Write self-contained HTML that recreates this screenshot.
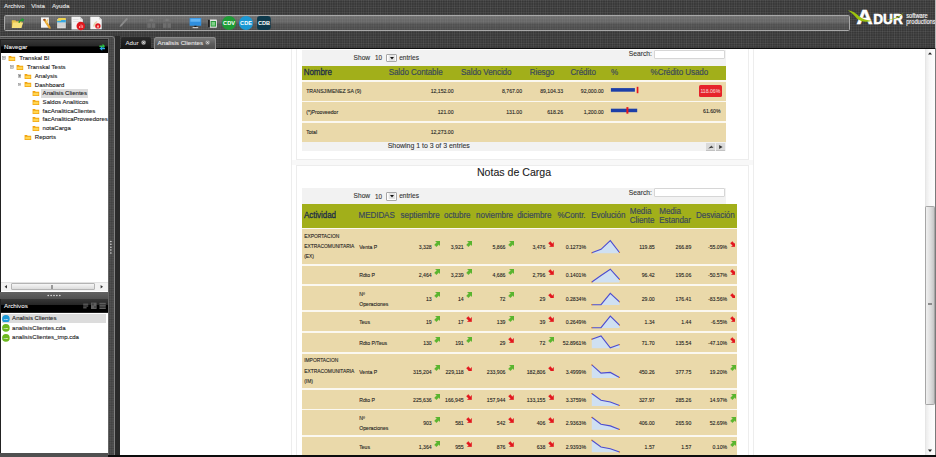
<!DOCTYPE html><html><head><meta charset="utf-8"><title>Adur BI - Analisis Clientes</title><style>
*{box-sizing:border-box}
html,body{margin:0;padding:0}
body{width:936px;height:457px;overflow:hidden;position:relative;background:#363636;font-family:"Liberation Sans",sans-serif;font-size:5px;color:#222}
.abs,.abs>*{position:absolute}
.t{position:absolute;white-space:nowrap;line-height:1;-webkit-text-stroke:.1px currentColor}
.hd{-webkit-text-stroke:.16px currentColor;letter-spacing:-.08px;transform:scaleY(1.1)}
.hs{-webkit-text-stroke:.25px currentColor}
.carbon{background-color:#373737;background-image:linear-gradient(rgba(255,255,255,.075) 1px,transparent 1px),linear-gradient(90deg,rgba(255,255,255,.075) 1px,transparent 1px);background-size:2.4px 2.4px}
.ui{font-family:"Liberation Sans",sans-serif;font-size:6.1px}
.cell{font-size:5px;color:#222}
.row{position:absolute;background:#ead9aa}
.r{text-align:right}
</style></head><body>
<div class="carbon" style="position:absolute;left:0.00px;top:0.00px;width:936.00px;height:49.00px;"></div>
<div class="" style="position:absolute;left:108.00px;top:47.90px;width:828.00px;height:1.10px;background:#0e0e0e"></div>
<div class="t " style="font-size:6.2px;color:#e4e4e4;left:4.00px;top:2.48px;height:7.44px;line-height:7.44px;">Archivo</div>
<div class="t " style="font-size:6.2px;color:#e4e4e4;left:31.30px;top:2.48px;height:7.44px;line-height:7.44px;">Vista</div>
<div class="t " style="font-size:6.2px;color:#e4e4e4;left:51.90px;top:2.48px;height:7.44px;line-height:7.44px;">Ayuda</div>
<div class="" style="position:absolute;left:3.70px;top:15.00px;width:846.10px;height:16.40px;border:1px solid #a8a8a8;border-radius:1.5px;background-image:linear-gradient(rgba(255,255,255,.05) 1px,transparent 1px),linear-gradient(90deg,rgba(255,255,255,.05) 1px,transparent 1px),linear-gradient(#6e6e6e,#646464 46%,#525252 54%,#4a4a4a);background-size:2.4px 2.4px,2.4px 2.4px,auto"></div>
<svg style="position:absolute;left:0.00px;top:12.00px;" width="300.00" height="22.00" viewBox="0 12 300 22"><path d="M11.8 20.2 h3.6 l0.8 1 h5.2 v6.9 h-9.6z" fill="#e8c24a"/><path d="M11.8 28.1 l1.4-5.6 h10 l-1.9 5.6z" fill="#f7e07a"/><path d="M18.3 22.6 c0.6-2.2 2-3.3 3.6-3.4 l-0.5-1.2 3 1.3 -1.6 2.8 -0.4-1.3 c-1.3 0.1-2.3 0.8-2.9 2.1z" fill="#1f9a32"/><rect x="41" y="17.4" width="7.9" height="10.3" fill="#f4f4f4"/><path d="M43 19.6 l2-0.9 5.6 8.4 -0.2 1.8 -1.7-0.7z" fill="#eaa62e"/><path d="M43 19.6 l2-0.9 0.9 1.3 -2 1z" fill="#9a4a2a"/><path d="M47.2 19.2 l1.2 0.4 -1.6 4 -1.0-1.4z" fill="#f0c860"/><rect x="57.1" y="19.2" width="8.7" height="9.1" fill="#d9d9d9"/><rect x="58.2" y="18" width="7.6" height="1.9" fill="#f2d54a"/><rect x="57.1" y="20" width="8.7" height="2.4" fill="#35a7e0"/><rect x="57.1" y="19.6" width="4" height="1.2" fill="#f0d850"/><rect x="57.1" y="23.6" width="8.7" height="0.7" fill="#c4c4c4"/><rect x="57.1" y="25.6" width="8.7" height="0.7" fill="#c4c4c4"/><path d="M71.5 16.8 h8.6 l2.7 2.7 v10.1 h-11.3z" fill="#f2f2f2"/><path d="M80.1 16.8 v2.7 h2.7z" fill="#cfcfcf"/><rect x="73" y="19" width="5.5" height="0.8" fill="#ddd"/><rect x="73" y="21" width="7.5" height="0.8" fill="#ddd"/><circle cx="80.8" cy="26" r="4.3" fill="#e0161c"/><path d="M79 28 v-2 h1 v2z M80.6 28 v-3.6 h1 v3.6z M82.2 28 v-2.7 h0.9 v2.7z" fill="#f4a0a0"/><path d="M90.3 16.8 h8.8 l2.6 2.6 v9.9 h-11.4z" fill="#f4f4f4"/><path d="M99.1 16.8 v2.6 h2.6z" fill="#cfcfcf"/><path d="M93 26.5 c0.5-3 2-5 4-5.5 l0.5 1 c-1.5 0.8-2.6 2.4-3 4.8z" fill="#e3d2a8"/><circle cx="97.9" cy="25.9" r="2.7" fill="#e0161c"/><path d="M96.6 27.6 c0.3-1.6 1-2.6 1.6-2.9 0.5 0.6 0.9 1.6 1 2.9z" fill="#f6b0a8"/><path d="M119.6 27 l0.6-2 6.3-7.3 1.5 1.2 -6.4 7.4z" fill="#8a8a8a"/><g fill="#707070" opacity=".9"><rect x="147.3" y="17.8" width="8" height="4.4"/><rect x="147.3" y="23.2" width="3.6" height="4.6"/><rect x="151.70000000000002" y="23.2" width="3.6" height="4.6"/></g><rect x="149.70000000000002" y="18.6" width="3.2" height="2.6" fill="#7a7a7a"/><g fill="#707070" opacity=".9"><rect x="163" y="17.8" width="8" height="4.4"/><rect x="163" y="23.2" width="3.6" height="4.6"/><rect x="167.4" y="23.2" width="3.6" height="4.6"/></g><rect x="165.4" y="18.6" width="3.2" height="2.6" fill="#7a7a7a"/><rect x="189.6" y="18" width="11.6" height="7.8" rx=".6" fill="#2f8fe0"/><rect x="190.4" y="18.7" width="10" height="3" fill="#62b4f4"/><rect x="194.3" y="25.8" width="2.2" height="1.4" fill="#1a1a1a"/><rect x="192.6" y="27" width="5.6" height="1.2" fill="#c8c8c8"/><rect x="207.9" y="19.5" width="9" height="8.2" rx=".6" fill="#e6e6e6"/><rect x="207.9" y="19.5" width="2" height="8.2" fill="#222"/><rect x="210.6" y="21" width="5.4" height="5.6" fill="#2c9a3c"/><rect x="211.6" y="22" width="3.4" height="3.6" fill="#7fd088"/><circle cx="229" cy="23" r="7.1" fill="#1f9c36"/><circle cx="246" cy="23" r="7.1" fill="#1b98d4"/><rect x="257" y="16" width="13.8" height="14" rx="3.2" fill="#0e3a4c"/><text x="229" y="25" font-family="Liberation Sans, sans-serif" font-weight="bold" font-size="5.6" fill="#fff" text-anchor="middle">CDV</text><text x="246" y="25" font-family="Liberation Sans, sans-serif" font-weight="bold" font-size="5.6" fill="#fff" text-anchor="middle">CDE</text><text x="264" y="25" font-family="Liberation Sans, sans-serif" font-weight="bold" font-size="5.6" fill="#fff" text-anchor="middle">CDB</text></svg>
<svg style="position:absolute;left:840.00px;top:4.00px;" width="96.00" height="28.00" viewBox="840 4 96 28"><text x="856.6" y="24.1" font-family="Liberation Sans, sans-serif" font-weight="bold" font-size="20.9" fill="#fff" stroke="#fff" stroke-width=".5" textLength="16.2" lengthAdjust="spacingAndGlyphs">A</text><text x="873.2" y="24.1" font-family="Liberation Sans, sans-serif" font-weight="bold" font-size="14.3" fill="#fff" stroke="#fff" stroke-width=".5" textLength="29.6" lengthAdjust="spacingAndGlyphs">DUR</text><path d="M847.8 10.2 c4.6 0.6 8.2 2.6 11.6 6.4 c3.4 2.6 7.4 3.8 12.4 4.2 c-5.6 1.6-10.8 1-14.6-2 c-2.6-3.4-5.4-6.2-9.4-8.6z" fill="#9cc20e"/><path d="M886.6 19.8 c6.4-0.4 12.4-2.8 17.2-7.4 c-4 5.2-10 8-17.2 7.4z" fill="#9cc20e"/><text x="906.2" y="18.4" font-family="Liberation Sans, sans-serif" font-size="6.4" fill="#f4f4f4" stroke="#f4f4f4" stroke-width=".15" textLength="21.6" lengthAdjust="spacingAndGlyphs">software</text><text x="906.2" y="24.3" font-family="Liberation Sans, sans-serif" font-size="6.4" fill="#f4f4f4" stroke="#f4f4f4" stroke-width=".15" textLength="29.4" lengthAdjust="spacingAndGlyphs">productions</text></svg>
<div class="" style="position:absolute;left:-2.00px;top:36.20px;width:117.20px;height:425.80px;border:1px solid #808080;border-radius:3px;background-color:#515151;background-image:linear-gradient(rgba(0,0,0,.12) 1px,transparent 1px),linear-gradient(90deg,rgba(0,0,0,.12) 1px,transparent 1px);background-size:2.4px 2.4px"></div>
<div class="" style="position:absolute;left:115.20px;top:36.00px;width:4.80px;height:421.00px;background:#2a2a2a"></div>
<div class="" style="position:absolute;left:108.00px;top:38.40px;width:1.40px;height:418.60px;background:#666"></div>
<div class="" style="position:absolute;left:0.00px;top:38.40px;width:108.00px;height:1.00px;background:#666"></div>
<div class="" style="position:absolute;left:0.00px;top:39.40px;width:108.00px;height:252.60px;background:#222"></div>
<div class="" style="position:absolute;left:0.60px;top:40.20px;width:107.00px;height:13.40px;background:linear-gradient(#383838,#262626 44%,#000 48%,#000)"></div>
<div class="t " style="font-size:6.2px;color:#f0f0f0;left:4.00px;top:43.08px;height:7.44px;line-height:7.44px;">Navegar</div>
<svg style="position:absolute;left:98.50px;top:43.00px;" width="6.50" height="7.50" viewBox="0 0 6.50 7.50"><path d="M0.4 2.4 h3.2 v-1.6 l2.6 2.4 -2.6 2.2 v-1.4 h-3.2z" fill="#2fbf3f"/><path d="M6.2 5.6 h-3 v1.5 l-2.7-2.2 2.7-2.2 v1.4 h3z" fill="#2aa6e8" transform="translate(0,0.6)"/></svg>
<div class="" style="position:absolute;left:0.60px;top:53.40px;width:107.20px;height:238.40px;background:#fff"></div>
<div style="position:absolute;left:1px;top:53.6px;width:106.6px;height:228px;overflow:hidden">
<svg style="position:absolute;left:1.00px;top:2.90px" width="3.8" height="3.8" viewBox="0 0 3.8 3.8"><rect x="0.25" y="0.25" width="3.3" height="3.3" fill="#f4f4f4" stroke="#8a8a8a" stroke-width=".5"/><rect x="0.9" y="1.65" width="2" height=".55" fill="#333"/></svg>
<svg style="position:absolute;left:7.40px;top:1.60px" width="7.8" height="6.4" viewBox="0 0 8 7"><path d="M0.4 1 h2.6 l0.8 0.9 h3.8 v4.6 h-7.2z" fill="#f2a20c"/><path d="M1.1 3 h5.8 v2.8 h-5.8z" fill="#ffd652"/></svg>
<div class="t" style="left:18.20px;top:0.80px;height:8px;line-height:8px;font-size:6.05px;color:#1a1a1a">Transkal BI</div>
<svg style="position:absolute;left:8.80px;top:11.62px" width="3.8" height="3.8" viewBox="0 0 3.8 3.8"><rect x="0.25" y="0.25" width="3.3" height="3.3" fill="#f4f4f4" stroke="#8a8a8a" stroke-width=".5"/><rect x="0.9" y="1.65" width="2" height=".55" fill="#333"/></svg>
<svg style="position:absolute;left:15.20px;top:10.32px" width="7.8" height="6.4" viewBox="0 0 8 7"><path d="M0.4 1 h2.6 l0.8 0.9 h3.8 v4.6 h-7.2z" fill="#f2a20c"/><path d="M1.1 3 h5.8 v2.8 h-5.8z" fill="#ffd652"/></svg>
<div class="t" style="left:26.00px;top:9.52px;height:8px;line-height:8px;font-size:6.05px;color:#1a1a1a">Transkal Tests</div>
<svg style="position:absolute;left:16.60px;top:20.34px" width="3.8" height="3.8" viewBox="0 0 3.8 3.8"><rect x="0.25" y="0.25" width="3.3" height="3.3" fill="#f4f4f4" stroke="#8a8a8a" stroke-width=".5"/><rect x="0.9" y="1.65" width="2" height=".55" fill="#333"/><rect x="1.63" y="0.9" width=".55" height="2" fill="#333"/></svg>
<svg style="position:absolute;left:23.00px;top:19.04px" width="7.8" height="6.4" viewBox="0 0 8 7"><path d="M0.4 1 h2.6 l0.8 0.9 h3.8 v4.6 h-7.2z" fill="#f2a20c"/><path d="M1.1 3 h5.8 v2.8 h-5.8z" fill="#ffd652"/></svg>
<div class="t" style="left:33.80px;top:18.24px;height:8px;line-height:8px;font-size:6.05px;color:#1a1a1a">Analysis</div>
<svg style="position:absolute;left:16.60px;top:29.06px" width="3.8" height="3.8" viewBox="0 0 3.8 3.8"><rect x="0.25" y="0.25" width="3.3" height="3.3" fill="#f4f4f4" stroke="#8a8a8a" stroke-width=".5"/><rect x="0.9" y="1.65" width="2" height=".55" fill="#333"/></svg>
<svg style="position:absolute;left:23.00px;top:27.76px" width="7.8" height="6.4" viewBox="0 0 8 7"><path d="M0.4 1 h2.6 l0.8 0.9 h3.8 v4.6 h-7.2z" fill="#f2a20c"/><path d="M1.1 3 h5.8 v2.8 h-5.8z" fill="#ffd652"/></svg>
<div class="t" style="left:33.80px;top:26.96px;height:8px;line-height:8px;font-size:6.05px;color:#1a1a1a">Dashboard</div>
<div style="position:absolute;left:40.20px;top:35.38px;width:46.5px;height:8.6px;background:#dcdcdc"></div>
<svg style="position:absolute;left:30.80px;top:36.48px" width="7.8" height="6.4" viewBox="0 0 8 7"><path d="M0.4 1 h2.6 l0.8 0.9 h3.8 v4.6 h-7.2z" fill="#f2a20c"/><path d="M1.1 3 h5.8 v2.8 h-5.8z" fill="#ffd652"/></svg>
<div class="t" style="left:41.60px;top:35.68px;height:8px;line-height:8px;font-size:6.05px;color:#1a1a1a">Analisis Clientes</div>
<svg style="position:absolute;left:30.80px;top:45.20px" width="7.8" height="6.4" viewBox="0 0 8 7"><path d="M0.4 1 h2.6 l0.8 0.9 h3.8 v4.6 h-7.2z" fill="#f2a20c"/><path d="M1.1 3 h5.8 v2.8 h-5.8z" fill="#ffd652"/></svg>
<div class="t" style="left:41.60px;top:44.40px;height:8px;line-height:8px;font-size:6.05px;color:#1a1a1a">Saldos Analiticos</div>
<svg style="position:absolute;left:30.80px;top:53.92px" width="7.8" height="6.4" viewBox="0 0 8 7"><path d="M0.4 1 h2.6 l0.8 0.9 h3.8 v4.6 h-7.2z" fill="#f2a20c"/><path d="M1.1 3 h5.8 v2.8 h-5.8z" fill="#ffd652"/></svg>
<div class="t" style="left:41.60px;top:53.12px;height:8px;line-height:8px;font-size:6.05px;color:#1a1a1a">facAnaliticaClientes</div>
<svg style="position:absolute;left:30.80px;top:62.64px" width="7.8" height="6.4" viewBox="0 0 8 7"><path d="M0.4 1 h2.6 l0.8 0.9 h3.8 v4.6 h-7.2z" fill="#f2a20c"/><path d="M1.1 3 h5.8 v2.8 h-5.8z" fill="#ffd652"/></svg>
<div class="t" style="left:41.60px;top:61.84px;height:8px;line-height:8px;font-size:6.05px;color:#1a1a1a">facAnaliticaProveedores</div>
<svg style="position:absolute;left:30.80px;top:71.36px" width="7.8" height="6.4" viewBox="0 0 8 7"><path d="M0.4 1 h2.6 l0.8 0.9 h3.8 v4.6 h-7.2z" fill="#f2a20c"/><path d="M1.1 3 h5.8 v2.8 h-5.8z" fill="#ffd652"/></svg>
<div class="t" style="left:41.60px;top:70.56px;height:8px;line-height:8px;font-size:6.05px;color:#1a1a1a">notaCarga</div>
<svg style="position:absolute;left:23.00px;top:80.08px" width="7.8" height="6.4" viewBox="0 0 8 7"><path d="M0.4 1 h2.6 l0.8 0.9 h3.8 v4.6 h-7.2z" fill="#f2a20c"/><path d="M1.1 3 h5.8 v2.8 h-5.8z" fill="#ffd652"/></svg>
<div class="t" style="left:33.80px;top:79.28px;height:8px;line-height:8px;font-size:6.05px;color:#1a1a1a">Reports</div>
</div>
<div class="" style="position:absolute;left:1.00px;top:282.00px;width:106.60px;height:9.00px;background:#f2f2f2;border-top:1px solid #e2e2e2"></div>
<div class="" style="position:absolute;left:11.40px;top:283.00px;width:83.90px;height:7.40px;background:linear-gradient(#f6f6f6,#dcdcdc);border:1px solid #b4b4b4;border-radius:1px"></div>
<svg style="position:absolute;left:2.00px;top:283.00px;" width="8.00" height="7.50" viewBox="0 0 8.00 7.50"><path d="M5 2 v3.6 l-2.4-1.8z" fill="#333"/></svg>
<svg style="position:absolute;left:97.00px;top:283.00px;" width="9.00" height="7.50" viewBox="0 0 9.00 7.50"><path d="M3.6 2 v3.6 l2.4-1.8z" fill="#333"/></svg>
<div class="" style="position:absolute;left:51.30px;top:285.00px;width:4.00px;height:3.60px;background:repeating-linear-gradient(90deg,#999 0,#999 .6px,transparent .6px,transparent 1.3px)"></div>
<div class="" style="position:absolute;left:0.00px;top:291.80px;width:108.00px;height:7.00px;background:linear-gradient(#626262,#505050)"></div>
<svg style="position:absolute;left:46.00px;top:293.00px;" width="16.00" height="5.00" viewBox="0 0 16.00 5.00"><circle cx="2.2" cy="2.4" r=".75" fill="#ededed"/><circle cx="5.1" cy="2.4" r=".75" fill="#ededed"/><circle cx="8.0" cy="2.4" r=".75" fill="#ededed"/><circle cx="10.9" cy="2.4" r=".75" fill="#ededed"/><circle cx="13.8" cy="2.4" r=".75" fill="#ededed"/></svg>
<div class="" style="position:absolute;left:0.00px;top:298.60px;width:108.00px;height:154.40px;background:#222"></div>
<div class="" style="position:absolute;left:0.60px;top:298.80px;width:107.40px;height:13.70px;background:linear-gradient(#383838,#262626 44%,#000 48%,#000)"></div>
<div class="t " style="font-size:6.2px;color:#f0f0f0;left:4.00px;top:302.28px;height:7.44px;line-height:7.44px;">Archivos</div>
<svg style="position:absolute;left:82.00px;top:302.00px;" width="25.00" height="8.00" viewBox="0 0 25.00 8.00"><g fill="#5e5e5e"><rect x="1.2" y="1.6" width="5" height="1.2"/><rect x="1.2" y="3.4" width="5" height="1.2"/><rect x="1.2" y="5.2" width="3.4" height="1.2"/><rect x="9" y="0.6" width="5.6" height="6.4"/><rect x="17.4" y="0.8" width="6.4" height="1.6"/><rect x="17.4" y="3.1" width="6.4" height="1.6"/><rect x="17.4" y="5.4" width="6.4" height="1.6"/></g><rect x="9.8" y="1.4" width="2" height="2" fill="#444"/><rect x="12.2" y="4" width="1.6" height="2" fill="#444"/></svg>
<div class="" style="position:absolute;left:0.60px;top:312.50px;width:107.20px;height:140.10px;background:#fff"></div>
<div class="" style="position:absolute;left:2.00px;top:314.20px;width:104.00px;height:8.40px;background:#dcdcdc"></div>
<svg style="position:absolute;left:2.10px;top:314.50px;" width="7.80" height="7.80" viewBox="0 0 7.80 7.80"><circle cx="3.9" cy="3.9" r="3.8" fill="#1d9ad8"/><text x="3.9" y="4.8" font-family="Liberation Sans, sans-serif" font-weight="bold" font-size="2.4" fill="#fff" text-anchor="middle">cde</text></svg>
<div class="t " style="font-size:6.05px;color:#1a1a1a;left:12.10px;top:314.77px;height:7.26px;line-height:7.26px;">Analisis Clientes</div>
<svg style="position:absolute;left:2.10px;top:324.35px;" width="7.80" height="7.80" viewBox="0 0 7.80 7.80"><circle cx="3.9" cy="3.9" r="3.8" fill="#6cb81e"/><text x="3.9" y="4.8" font-family="Liberation Sans, sans-serif" font-weight="bold" font-size="2.4" fill="#fff" text-anchor="middle">cda</text></svg>
<div class="t " style="font-size:6.05px;color:#1a1a1a;left:12.10px;top:324.62px;height:7.26px;line-height:7.26px;">analisisClientes.cda</div>
<svg style="position:absolute;left:2.10px;top:334.20px;" width="7.80" height="7.80" viewBox="0 0 7.80 7.80"><circle cx="3.9" cy="3.9" r="3.8" fill="#6cb81e"/><text x="3.9" y="4.8" font-family="Liberation Sans, sans-serif" font-weight="bold" font-size="2.4" fill="#fff" text-anchor="middle">cda</text></svg>
<div class="t " style="font-size:6.05px;color:#1a1a1a;left:12.10px;top:334.47px;height:7.26px;line-height:7.26px;">analisisClientes_tmp.cda</div>
<svg style="position:absolute;left:109.00px;top:239.00px;" width="4.00" height="17.00" viewBox="0 0 4.00 17.00"><circle cx="1.9" cy="2.4" r=".75" fill="#e6e6e6"/><circle cx="1.9" cy="5.3" r=".75" fill="#e6e6e6"/><circle cx="1.9" cy="8.2" r=".75" fill="#e6e6e6"/><circle cx="1.9" cy="11.1" r=".75" fill="#e6e6e6"/><circle cx="1.9" cy="14.0" r=".75" fill="#e6e6e6"/></svg>
<div class="" style="position:absolute;left:0.00px;top:452.80px;width:108.00px;height:4.20px;background:#505050"></div>
<div class="" style="position:absolute;left:121.40px;top:36.60px;width:29.80px;height:12.20px;background:linear-gradient(#2a2a2a,#141414);border-radius:2px 2px 0 0"></div>
<div class="t " style="font-size:6.2px;color:#dcdcdc;left:125.40px;top:38.78px;height:7.44px;line-height:7.44px;">Adur</div>
<div class="" style="position:absolute;left:154.00px;top:36.80px;width:62.20px;height:12.00px;background:linear-gradient(#7a7a7a,#5e5e5e 50%,#4c4c4c);border:1px solid #8c8c8c;border-bottom:none;border-radius:2.5px 2.5px 0 0"></div>
<div class="t " style="font-size:6.2px;color:#e6e6e6;left:157.60px;top:38.78px;height:7.44px;line-height:7.44px;">Analisis Clientes</div>
<svg style="position:absolute;left:140.80px;top:40.20px;" width="5.20" height="5.20" viewBox="0 0 5.20 5.20"><circle cx="2.6" cy="2.6" r="2.4" fill="#8a8a8a"/><path d="M1.5 1.5 l2.2 2.2 M3.7 1.5 l-2.2 2.2" stroke="#eee" stroke-width=".7"/></svg>
<svg style="position:absolute;left:205.00px;top:40.20px;" width="5.20" height="5.20" viewBox="0 0 5.20 5.20"><circle cx="2.6" cy="2.6" r="2.4" fill="#8a8a8a"/><path d="M1.5 1.5 l2.2 2.2 M3.7 1.5 l-2.2 2.2" stroke="#eee" stroke-width=".7"/></svg>
<div class="" style="position:absolute;left:120.00px;top:48.80px;width:815.40px;height:406.00px;background:#fff"></div>
<div class="" style="position:absolute;left:935.20px;top:0.00px;width:0.80px;height:48.00px;background:#b8b8b8"></div>
<div class="" style="position:absolute;left:935.20px;top:48.00px;width:0.80px;height:409.00px;background:#7a7a7a"></div>
<div class="" style="position:absolute;left:108.00px;top:454.80px;width:828.00px;height:2.20px;background:#0c0c0c"></div>
<div class="" style="position:absolute;left:291.30px;top:48.80px;width:0.80px;height:406.00px;background:#ededed"></div>
<div class="" style="position:absolute;left:753.40px;top:48.80px;width:0.80px;height:406.00px;background:#ededed"></div>
<div class="" style="position:absolute;left:292.10px;top:159.80px;width:461.30px;height:5.00px;background:#f8f8f8"></div>
<div class="" style="position:absolute;left:296.20px;top:48.80px;width:453.20px;height:111.20px;border:0.8px solid #ededed;border-top:none;background:#fff"></div>
<div class="" style="position:absolute;left:296.20px;top:164.60px;width:453.20px;height:295.40px;border:0.8px solid #ededed;background:#fff"></div>
<div class="" style="position:absolute;left:301.70px;top:50.40px;width:423.90px;height:101.00px;background:#f2f2f2"></div>
<div class="t " style="font-size:6.6px;color:#333;left:353.60px;top:54.34px;height:7.92px;line-height:7.92px;">Show</div>
<div class="t " style="font-size:6.4px;color:#333;left:374.90px;top:54.46px;height:7.68px;line-height:7.68px;">10</div>
<div class="" style="position:absolute;left:385.60px;top:54.10px;width:11.00px;height:8.40px;border:0.8px solid #a8a8a8;background:#fff;border-radius:1px"></div>
<svg style="position:absolute;left:388.00px;top:55.30px;" width="8.00" height="6.00" viewBox="0 0 8.00 6.00"><rect x="0.6" y="0" width="6.6" height="6" fill="#e4e4e4"/><path d="M2 2 h4 l-2 2.4z" fill="#111"/></svg>
<div class="t " style="font-size:6.6px;color:#333;left:399.20px;top:54.34px;height:7.92px;line-height:7.92px;">entries</div>
<div class="t " style="font-size:6.7px;color:#333;left:628.80px;top:50.38px;height:8.04px;line-height:8.04px;">Search:</div>
<div class="" style="position:absolute;left:654.40px;top:50.00px;width:70.60px;height:8.90px;border:0.8px solid #d6d6d6;background:#fff;border-radius:1px"></div>
<div class="" style="position:absolute;left:301.70px;top:66.20px;width:423.90px;height:14.40px;background:#a2af1a"></div>
<div class="t hd hs" style="font-size:8.05px;color:#1c2c48;left:303.70px;top:68.47px;height:9.66px;line-height:9.66px;">Nombre</div>
<div class="t hd" style="font-size:8.05px;color:#3a485c;left:388.70px;top:68.47px;height:9.66px;line-height:9.66px;">Saldo Contable</div>
<div class="t hd" style="font-size:8.05px;color:#3a485c;left:461.00px;top:68.47px;height:9.66px;line-height:9.66px;">Saldo Vencido</div>
<div class="t hd" style="font-size:8.05px;color:#3a485c;left:529.70px;top:68.47px;height:9.66px;line-height:9.66px;">Riesgo</div>
<div class="t hd" style="font-size:8.05px;color:#3a485c;left:570.40px;top:68.47px;height:9.66px;line-height:9.66px;">Crédito</div>
<div class="t hd" style="font-size:8.05px;color:#3a485c;left:610.90px;top:68.47px;height:9.66px;line-height:9.66px;">%</div>
<div class="t hd" style="font-size:8.05px;color:#3a485c;left:650.60px;top:68.47px;height:9.66px;line-height:9.66px;">%Crédito Usado</div>
<div class="" style="position:absolute;left:301.70px;top:80.20px;width:423.90px;height:1.80px;background:#fbf8f0"></div>
<div class="" style="position:absolute;left:301.70px;top:81.75px;width:423.90px;height:19.00px;background:#ead9aa"></div>
<div class="" style="position:absolute;left:301.70px;top:100.50px;width:423.90px;height:1.80px;background:#fbf8f0"></div>
<div class="" style="position:absolute;left:301.70px;top:102.05px;width:423.90px;height:19.20px;background:#ead9aa"></div>
<div class="" style="position:absolute;left:301.70px;top:121.00px;width:423.90px;height:1.80px;background:#fbf8f0"></div>
<div class="" style="position:absolute;left:301.70px;top:122.55px;width:423.90px;height:19.10px;background:#ead9aa"></div>
<div class="t " style="font-size:5.15px;color:#1f1f1f;left:306.20px;top:88.36px;height:6.18px;line-height:6.18px;">TRANSJIMENEZ SA (9)</div>
<div class="t " style="font-size:5.15px;color:#1f1f1f;right:482.50px;top:88.36px;height:6.18px;line-height:6.18px;">12,152.00</div>
<div class="t " style="font-size:5.15px;color:#1f1f1f;right:414.00px;top:88.36px;height:6.18px;line-height:6.18px;">8,767.00</div>
<div class="t " style="font-size:5.15px;color:#1f1f1f;right:373.00px;top:88.36px;height:6.18px;line-height:6.18px;">89,104.33</div>
<div class="t " style="font-size:5.15px;color:#1f1f1f;right:332.30px;top:88.36px;height:6.18px;line-height:6.18px;">92,000.00</div>
<div class="t " style="font-size:5.15px;color:#1f1f1f;left:306.20px;top:108.76px;height:6.18px;line-height:6.18px;">(*)Prooveedor</div>
<div class="t " style="font-size:5.15px;color:#1f1f1f;right:482.50px;top:108.76px;height:6.18px;line-height:6.18px;">121.00</div>
<div class="t " style="font-size:5.15px;color:#1f1f1f;right:414.00px;top:108.76px;height:6.18px;line-height:6.18px;">131.00</div>
<div class="t " style="font-size:5.15px;color:#1f1f1f;right:373.00px;top:108.76px;height:6.18px;line-height:6.18px;">618.26</div>
<div class="t " style="font-size:5.15px;color:#1f1f1f;right:332.30px;top:108.76px;height:6.18px;line-height:6.18px;">1,200.00</div>
<div class="t " style="font-size:5.15px;color:#1f1f1f;left:306.20px;top:129.21px;height:6.18px;line-height:6.18px;">Total</div>
<div class="t " style="font-size:5.15px;color:#1f1f1f;right:482.50px;top:129.21px;height:6.18px;line-height:6.18px;">12,273.00</div>
<svg style="position:absolute;left:605.00px;top:84.00px;" width="40.00" height="32.00" viewBox="605 84 40 32"><rect x="610.9" y="88.1" width="24" height="3.6" fill="#1d3fa8"/><rect x="636.7" y="86.8" width="1.7" height="6.4" fill="#e8161c"/><rect x="610.9" y="108.7" width="26.3" height="3.5" fill="#1d3fa8"/><rect x="626.4" y="107.1" width="2" height="6.6" fill="#e8161c"/></svg>
<div class="" style="position:absolute;left:699.20px;top:85.20px;width:22.40px;height:11.50px;background:#e6232b;border-radius:1.6px"></div>
<div class="t " style="font-size:5.15px;color:#f7c6c6;right:215.70px;top:88.11px;height:6.18px;line-height:6.18px;">118.06%</div>
<div class="t " style="font-size:5.15px;color:#1f1f1f;right:215.50px;top:108.41px;height:6.18px;line-height:6.18px;">61.60%</div>
<div class="t " style="font-size:6.95px;color:#333;left:387.70px;top:142.03px;height:8.34px;line-height:8.34px;">Showing 1 to 3 of 3 entries</div>
<svg style="position:absolute;left:705.60px;top:143.20px;" width="9.10" height="8.20" viewBox="0 0 9.10 8.20"><rect x="0" y="0" width="9.1" height="8.2" fill="#dadada"/><rect x="0" y="7" width="9.1" height="1.2" fill="#c2c2c2"/><path d="M2.2 5.4 l3.6-3 v1.4 h1.4 v1 h-1.4 v0z" fill="#333"/></svg>
<svg style="position:absolute;left:716.40px;top:143.20px;" width="9.10" height="8.20" viewBox="0 0 9.10 8.20"><rect x="0" y="0" width="9.1" height="8.2" fill="#dadada"/><rect x="0" y="7" width="9.1" height="1.2" fill="#c2c2c2"/><path d="M3.2 2 l3.4 2 -3.4 2z" fill="#333"/></svg>
<div class="t " style="font-size:10.6px;color:#222;left:414.00px;width:200px;text-align:center;top:165.84px;height:12.72px;line-height:12.72px;">Notas de Carga</div>
<div class="" style="position:absolute;left:301.70px;top:187.90px;width:423.90px;height:16.30px;background:#f2f2f2"></div>
<div class="t " style="font-size:6.6px;color:#333;left:353.60px;top:192.44px;height:7.92px;line-height:7.92px;">Show</div>
<div class="t " style="font-size:6.4px;color:#333;left:374.90px;top:192.56px;height:7.68px;line-height:7.68px;">10</div>
<div class="" style="position:absolute;left:385.60px;top:192.20px;width:11.00px;height:8.40px;border:0.8px solid #a8a8a8;background:#fff;border-radius:1px"></div>
<svg style="position:absolute;left:388.00px;top:193.40px;" width="8.00" height="6.00" viewBox="0 0 8.00 6.00"><rect x="0.6" y="0" width="6.6" height="6" fill="#e4e4e4"/><path d="M2 2 h4 l-2 2.4z" fill="#111"/></svg>
<div class="t " style="font-size:6.6px;color:#333;left:399.20px;top:192.44px;height:7.92px;line-height:7.92px;">entries</div>
<div class="t " style="font-size:6.7px;color:#333;left:628.80px;top:188.58px;height:8.04px;line-height:8.04px;">Search:</div>
<div class="" style="position:absolute;left:654.40px;top:187.80px;width:70.60px;height:9.50px;border:0.8px solid #d6d6d6;background:#fff;border-radius:1px"></div>
<div class="" style="position:absolute;left:301.70px;top:203.90px;width:435.50px;height:24.50px;background:#a2af1a"></div>
<div class="t hd hs" style="font-size:8.05px;color:#1c2c48;left:304.00px;top:211.47px;height:9.66px;line-height:9.66px;">Actividad</div>
<div class="t hd" style="font-size:8.05px;color:#3a485c;left:358.60px;top:211.47px;height:9.66px;line-height:9.66px;">MEDIDAS</div>
<div class="t hd" style="font-size:8.05px;color:#3a485c;left:400.60px;top:211.47px;height:9.66px;line-height:9.66px;">septiembre</div>
<div class="t hd" style="font-size:8.05px;color:#3a485c;left:444.10px;top:211.47px;height:9.66px;line-height:9.66px;">octubre</div>
<div class="t hd" style="font-size:8.05px;color:#3a485c;left:476.10px;top:211.47px;height:9.66px;line-height:9.66px;">noviembre</div>
<div class="t hd" style="font-size:8.05px;color:#3a485c;left:517.20px;top:211.47px;height:9.66px;line-height:9.66px;">diciembre</div>
<div class="t hd" style="font-size:8.05px;color:#3a485c;left:557.40px;top:211.47px;height:9.66px;line-height:9.66px;">%Contr.</div>
<div class="t hd" style="font-size:8.05px;color:#3a485c;left:591.20px;top:211.47px;height:9.66px;line-height:9.66px;">Evolución</div>
<div class="t hd" style="font-size:8.05px;color:#3a485c;left:696.10px;top:211.47px;height:9.66px;line-height:9.66px;">Desviación</div>
<div class="t hd" style="font-size:8.05px;color:#3a485c;left:629.80px;top:206.67px;height:9.66px;line-height:9.66px;">Media</div>
<div class="t hd" style="font-size:8.05px;color:#3a485c;left:629.80px;top:216.37px;height:9.66px;line-height:9.66px;">Cliente</div>
<div class="t hd" style="font-size:8.05px;color:#3a485c;left:659.30px;top:206.67px;height:9.66px;line-height:9.66px;">Media</div>
<div class="t hd" style="font-size:8.05px;color:#3a485c;left:659.30px;top:216.37px;height:9.66px;line-height:9.66px;">Estandar</div>
<div class="" style="position:absolute;left:301.70px;top:227.60px;width:435.50px;height:1.80px;background:#fbf8f0"></div>
<div class="" style="position:absolute;left:301.70px;top:229.15px;width:435.50px;height:35.10px;background:#ead9aa"></div>
<div class="t " style="font-size:4.9px;color:#1f1f1f;left:304.20px;top:234.06px;height:5.88px;line-height:5.88px;">EXPORTACION</div>
<div class="t " style="font-size:4.9px;color:#1f1f1f;left:304.20px;top:244.26px;height:5.88px;line-height:5.88px;">EXTRACOMUNITARIA</div>
<div class="t " style="font-size:4.9px;color:#1f1f1f;left:304.20px;top:254.46px;height:5.88px;line-height:5.88px;">(EX)</div>
<div class="t " style="font-size:5.15px;color:#1f1f1f;left:359.20px;top:244.21px;height:6.18px;line-height:6.18px;">Venta P</div>
<div class="t " style="font-size:5.15px;color:#1f1f1f;right:504.30px;top:244.21px;height:6.18px;line-height:6.18px;">3,328</div>
<svg style="position:absolute;left:434.20px;top:241.00px" width="6.3" height="6.3" viewBox="0 0 6 6"><path d="M1.4 0.1 L5.9 0.1 5.9 4.6 4.57 3.27 2.31 5.53 0.47 3.69 2.73 1.43z" fill="#5ab52f" stroke="#5ab52f" stroke-width=".35" stroke-linejoin="round"/></svg>
<div class="t " style="font-size:5.15px;color:#1f1f1f;right:472.30px;top:244.21px;height:6.18px;line-height:6.18px;">3,921</div>
<svg style="position:absolute;left:466.20px;top:241.00px" width="6.3" height="6.3" viewBox="0 0 6 6"><path d="M1.4 0.1 L5.9 0.1 5.9 4.6 4.57 3.27 2.31 5.53 0.47 3.69 2.73 1.43z" fill="#5ab52f" stroke="#5ab52f" stroke-width=".35" stroke-linejoin="round"/></svg>
<div class="t " style="font-size:5.15px;color:#1f1f1f;right:430.60px;top:244.21px;height:6.18px;line-height:6.18px;">5,866</div>
<svg style="position:absolute;left:507.90px;top:241.00px" width="6.3" height="6.3" viewBox="0 0 6 6"><path d="M1.4 0.1 L5.9 0.1 5.9 4.6 4.57 3.27 2.31 5.53 0.47 3.69 2.73 1.43z" fill="#5ab52f" stroke="#5ab52f" stroke-width=".35" stroke-linejoin="round"/></svg>
<div class="t " style="font-size:5.15px;color:#1f1f1f;right:390.70px;top:244.21px;height:6.18px;line-height:6.18px;">3,476</div>
<svg style="position:absolute;left:547.80px;top:241.20px" width="5.8" height="5.8" viewBox="0 0 6 6"><path d="M1.4 5.9 L5.9 5.9 5.9 1.4 4.57 2.73 2.31 0.47 0.47 2.31 2.73 4.57z" fill="#e3171f" stroke="#e3171f" stroke-width=".35" stroke-linejoin="round"/></svg>
<div class="t " style="font-size:5.15px;color:#1f1f1f;right:350.00px;top:244.21px;height:6.18px;line-height:6.18px;">0.1273%</div>
<div class="t " style="font-size:5.15px;color:#1f1f1f;right:281.40px;top:244.21px;height:6.18px;line-height:6.18px;">119.85</div>
<div class="t " style="font-size:5.15px;color:#1f1f1f;right:244.70px;top:244.21px;height:6.18px;line-height:6.18px;">266.89</div>
<div class="t " style="font-size:5.15px;color:#1f1f1f;right:208.90px;top:244.21px;height:6.18px;line-height:6.18px;">-55.09%</div>
<svg style="position:absolute;left:729.60px;top:241.20px" width="5.8" height="5.8" viewBox="0 0 6 6"><path d="M1.4 5.9 L5.9 5.9 5.9 1.4 4.57 2.73 2.31 0.47 0.47 2.31 2.73 4.57z" fill="#e3171f" stroke="#e3171f" stroke-width=".35" stroke-linejoin="round"/></svg>
<svg style="position:absolute;left:588.00px;top:229.40px;" width="36.00" height="34.60" viewBox="588 229.4 36 34.599999999999994"><polygon points="591.8,253.6 591.8,253.2 601.0,249.7 610.3,241.0 619.5,252.9 619.5,253.6" fill="#cfe0f2"/><polyline points="591.8,253.2 601.0,249.7 610.3,241.0 619.5,252.9" fill="none" stroke="#4c4cd0" stroke-width="1.1"/><circle cx="591.8" cy="253.2" r=".6" fill="#f08000"/><circle cx="619.5" cy="252.9" r=".6" fill="#f08000"/></svg>
<div class="" style="position:absolute;left:301.70px;top:264.00px;width:435.50px;height:1.80px;background:#fbf8f0"></div>
<div class="" style="position:absolute;left:301.70px;top:265.55px;width:435.50px;height:18.70px;background:#ead9aa"></div>
<div class="t " style="font-size:5.15px;color:#1f1f1f;left:359.20px;top:272.41px;height:6.18px;line-height:6.18px;">Rdto P</div>
<div class="t " style="font-size:5.15px;color:#1f1f1f;right:504.30px;top:272.41px;height:6.18px;line-height:6.18px;">2,464</div>
<svg style="position:absolute;left:434.20px;top:269.20px" width="6.3" height="6.3" viewBox="0 0 6 6"><path d="M1.4 0.1 L5.9 0.1 5.9 4.6 4.57 3.27 2.31 5.53 0.47 3.69 2.73 1.43z" fill="#5ab52f" stroke="#5ab52f" stroke-width=".35" stroke-linejoin="round"/></svg>
<div class="t " style="font-size:5.15px;color:#1f1f1f;right:472.30px;top:272.41px;height:6.18px;line-height:6.18px;">3,239</div>
<svg style="position:absolute;left:466.20px;top:269.20px" width="6.3" height="6.3" viewBox="0 0 6 6"><path d="M1.4 0.1 L5.9 0.1 5.9 4.6 4.57 3.27 2.31 5.53 0.47 3.69 2.73 1.43z" fill="#5ab52f" stroke="#5ab52f" stroke-width=".35" stroke-linejoin="round"/></svg>
<div class="t " style="font-size:5.15px;color:#1f1f1f;right:430.60px;top:272.41px;height:6.18px;line-height:6.18px;">4,686</div>
<svg style="position:absolute;left:507.90px;top:269.20px" width="6.3" height="6.3" viewBox="0 0 6 6"><path d="M1.4 0.1 L5.9 0.1 5.9 4.6 4.57 3.27 2.31 5.53 0.47 3.69 2.73 1.43z" fill="#5ab52f" stroke="#5ab52f" stroke-width=".35" stroke-linejoin="round"/></svg>
<div class="t " style="font-size:5.15px;color:#1f1f1f;right:390.70px;top:272.41px;height:6.18px;line-height:6.18px;">2,796</div>
<svg style="position:absolute;left:547.80px;top:269.40px" width="5.8" height="5.8" viewBox="0 0 6 6"><path d="M1.4 5.9 L5.9 5.9 5.9 1.4 4.57 2.73 2.31 0.47 0.47 2.31 2.73 4.57z" fill="#e3171f" stroke="#e3171f" stroke-width=".35" stroke-linejoin="round"/></svg>
<div class="t " style="font-size:5.15px;color:#1f1f1f;right:350.00px;top:272.41px;height:6.18px;line-height:6.18px;">0.1401%</div>
<div class="t " style="font-size:5.15px;color:#1f1f1f;right:281.40px;top:272.41px;height:6.18px;line-height:6.18px;">96.42</div>
<div class="t " style="font-size:5.15px;color:#1f1f1f;right:244.70px;top:272.41px;height:6.18px;line-height:6.18px;">195.06</div>
<div class="t " style="font-size:5.15px;color:#1f1f1f;right:208.90px;top:272.41px;height:6.18px;line-height:6.18px;">-50.57%</div>
<svg style="position:absolute;left:729.60px;top:269.40px" width="5.8" height="5.8" viewBox="0 0 6 6"><path d="M1.4 5.9 L5.9 5.9 5.9 1.4 4.57 2.73 2.31 0.47 0.47 2.31 2.73 4.57z" fill="#e3171f" stroke="#e3171f" stroke-width=".35" stroke-linejoin="round"/></svg>
<svg style="position:absolute;left:588.00px;top:265.80px;" width="36.00" height="18.20" viewBox="588 265.8 36 18.19999999999999"><polygon points="591.8,282.2 591.8,281.8 601.0,275.3 610.3,269.0 619.5,279.2 619.5,282.2" fill="#cfe0f2"/><polyline points="591.8,281.8 601.0,275.3 610.3,269.0 619.5,279.2" fill="none" stroke="#4c4cd0" stroke-width="1.1"/><circle cx="591.8" cy="281.8" r=".6" fill="#f08000"/><circle cx="619.5" cy="279.2" r=".6" fill="#f08000"/></svg>
<div class="" style="position:absolute;left:301.70px;top:284.00px;width:435.50px;height:1.80px;background:#fbf8f0"></div>
<div class="" style="position:absolute;left:301.70px;top:285.55px;width:435.50px;height:25.10px;background:#ead9aa"></div>
<div class="t " style="font-size:5.15px;color:#1f1f1f;left:359.20px;top:290.51px;height:6.18px;line-height:6.18px;">Nº</div>
<div class="t " style="font-size:5.15px;color:#1f1f1f;left:359.20px;top:300.71px;height:6.18px;line-height:6.18px;">Operaciones</div>
<div class="t " style="font-size:5.15px;color:#1f1f1f;right:504.30px;top:295.61px;height:6.18px;line-height:6.18px;">13</div>
<svg style="position:absolute;left:434.20px;top:292.40px" width="6.3" height="6.3" viewBox="0 0 6 6"><path d="M1.4 0.1 L5.9 0.1 5.9 4.6 4.57 3.27 2.31 5.53 0.47 3.69 2.73 1.43z" fill="#5ab52f" stroke="#5ab52f" stroke-width=".35" stroke-linejoin="round"/></svg>
<div class="t " style="font-size:5.15px;color:#1f1f1f;right:472.30px;top:295.61px;height:6.18px;line-height:6.18px;">14</div>
<svg style="position:absolute;left:466.20px;top:292.40px" width="6.3" height="6.3" viewBox="0 0 6 6"><path d="M1.4 0.1 L5.9 0.1 5.9 4.6 4.57 3.27 2.31 5.53 0.47 3.69 2.73 1.43z" fill="#5ab52f" stroke="#5ab52f" stroke-width=".35" stroke-linejoin="round"/></svg>
<div class="t " style="font-size:5.15px;color:#1f1f1f;right:430.60px;top:295.61px;height:6.18px;line-height:6.18px;">72</div>
<svg style="position:absolute;left:507.90px;top:292.40px" width="6.3" height="6.3" viewBox="0 0 6 6"><path d="M1.4 0.1 L5.9 0.1 5.9 4.6 4.57 3.27 2.31 5.53 0.47 3.69 2.73 1.43z" fill="#5ab52f" stroke="#5ab52f" stroke-width=".35" stroke-linejoin="round"/></svg>
<div class="t " style="font-size:5.15px;color:#1f1f1f;right:390.70px;top:295.61px;height:6.18px;line-height:6.18px;">29</div>
<svg style="position:absolute;left:547.80px;top:292.60px" width="5.8" height="5.8" viewBox="0 0 6 6"><path d="M1.4 5.9 L5.9 5.9 5.9 1.4 4.57 2.73 2.31 0.47 0.47 2.31 2.73 4.57z" fill="#e3171f" stroke="#e3171f" stroke-width=".35" stroke-linejoin="round"/></svg>
<div class="t " style="font-size:5.15px;color:#1f1f1f;right:350.00px;top:295.61px;height:6.18px;line-height:6.18px;">0.2834%</div>
<div class="t " style="font-size:5.15px;color:#1f1f1f;right:281.40px;top:295.61px;height:6.18px;line-height:6.18px;">29.00</div>
<div class="t " style="font-size:5.15px;color:#1f1f1f;right:244.70px;top:295.61px;height:6.18px;line-height:6.18px;">176.41</div>
<div class="t " style="font-size:5.15px;color:#1f1f1f;right:208.90px;top:295.61px;height:6.18px;line-height:6.18px;">-83.56%</div>
<svg style="position:absolute;left:729.60px;top:292.60px" width="5.8" height="5.8" viewBox="0 0 6 6"><path d="M1.4 5.9 L5.9 5.9 5.9 1.4 4.57 2.73 2.31 0.47 0.47 2.31 2.73 4.57z" fill="#e3171f" stroke="#e3171f" stroke-width=".35" stroke-linejoin="round"/></svg>
<svg style="position:absolute;left:588.00px;top:285.80px;" width="36.00" height="24.60" viewBox="588 285.8 36 24.599999999999966"><polygon points="591.8,304.9 591.8,304.5 601.0,304.5 610.3,293.2 619.5,301.6 619.5,304.9" fill="#cfe0f2"/><polyline points="591.8,304.5 601.0,304.5 610.3,293.2 619.5,301.6" fill="none" stroke="#4c4cd0" stroke-width="1.1"/><circle cx="591.8" cy="304.5" r=".6" fill="#f08000"/><circle cx="619.5" cy="301.6" r=".6" fill="#f08000"/></svg>
<div class="" style="position:absolute;left:301.70px;top:310.40px;width:435.50px;height:1.80px;background:#fbf8f0"></div>
<div class="" style="position:absolute;left:301.70px;top:311.95px;width:435.50px;height:19.50px;background:#ead9aa"></div>
<div class="t " style="font-size:5.15px;color:#1f1f1f;left:359.20px;top:319.21px;height:6.18px;line-height:6.18px;">Teus</div>
<div class="t " style="font-size:5.15px;color:#1f1f1f;right:504.30px;top:319.21px;height:6.18px;line-height:6.18px;">19</div>
<svg style="position:absolute;left:434.20px;top:316.00px" width="6.3" height="6.3" viewBox="0 0 6 6"><path d="M1.4 0.1 L5.9 0.1 5.9 4.6 4.57 3.27 2.31 5.53 0.47 3.69 2.73 1.43z" fill="#5ab52f" stroke="#5ab52f" stroke-width=".35" stroke-linejoin="round"/></svg>
<div class="t " style="font-size:5.15px;color:#1f1f1f;right:472.30px;top:319.21px;height:6.18px;line-height:6.18px;">17</div>
<svg style="position:absolute;left:466.20px;top:316.20px" width="5.8" height="5.8" viewBox="0 0 6 6"><path d="M1.4 5.9 L5.9 5.9 5.9 1.4 4.57 2.73 2.31 0.47 0.47 2.31 2.73 4.57z" fill="#e3171f" stroke="#e3171f" stroke-width=".35" stroke-linejoin="round"/></svg>
<div class="t " style="font-size:5.15px;color:#1f1f1f;right:430.60px;top:319.21px;height:6.18px;line-height:6.18px;">139</div>
<svg style="position:absolute;left:507.90px;top:316.00px" width="6.3" height="6.3" viewBox="0 0 6 6"><path d="M1.4 0.1 L5.9 0.1 5.9 4.6 4.57 3.27 2.31 5.53 0.47 3.69 2.73 1.43z" fill="#5ab52f" stroke="#5ab52f" stroke-width=".35" stroke-linejoin="round"/></svg>
<div class="t " style="font-size:5.15px;color:#1f1f1f;right:390.70px;top:319.21px;height:6.18px;line-height:6.18px;">39</div>
<svg style="position:absolute;left:547.80px;top:316.20px" width="5.8" height="5.8" viewBox="0 0 6 6"><path d="M1.4 5.9 L5.9 5.9 5.9 1.4 4.57 2.73 2.31 0.47 0.47 2.31 2.73 4.57z" fill="#e3171f" stroke="#e3171f" stroke-width=".35" stroke-linejoin="round"/></svg>
<div class="t " style="font-size:5.15px;color:#1f1f1f;right:350.00px;top:319.21px;height:6.18px;line-height:6.18px;">0.2649%</div>
<div class="t " style="font-size:5.15px;color:#1f1f1f;right:281.40px;top:319.21px;height:6.18px;line-height:6.18px;">1.34</div>
<div class="t " style="font-size:5.15px;color:#1f1f1f;right:244.70px;top:319.21px;height:6.18px;line-height:6.18px;">1.44</div>
<div class="t " style="font-size:5.15px;color:#1f1f1f;right:208.90px;top:319.21px;height:6.18px;line-height:6.18px;">-6.55%</div>
<svg style="position:absolute;left:729.60px;top:316.20px" width="5.8" height="5.8" viewBox="0 0 6 6"><path d="M1.4 5.9 L5.9 5.9 5.9 1.4 4.57 2.73 2.31 0.47 0.47 2.31 2.73 4.57z" fill="#e3171f" stroke="#e3171f" stroke-width=".35" stroke-linejoin="round"/></svg>
<svg style="position:absolute;left:588.00px;top:312.20px;" width="36.00" height="19.00" viewBox="588 312.2 36 19.0"><polygon points="591.8,328.3 591.8,327.9 601.0,327.9 610.3,316.3 619.5,325.3 619.5,328.3" fill="#cfe0f2"/><polyline points="591.8,327.9 601.0,327.9 610.3,316.3 619.5,325.3" fill="none" stroke="#4c4cd0" stroke-width="1.1"/><circle cx="591.8" cy="327.9" r=".6" fill="#f08000"/><circle cx="619.5" cy="325.3" r=".6" fill="#f08000"/></svg>
<div class="" style="position:absolute;left:301.70px;top:331.40px;width:435.50px;height:1.80px;background:#fbf8f0"></div>
<div class="" style="position:absolute;left:301.70px;top:332.95px;width:435.50px;height:19.30px;background:#ead9aa"></div>
<div class="t " style="font-size:5.15px;color:#1f1f1f;left:359.20px;top:340.11px;height:6.18px;line-height:6.18px;">Rdto P/Teus</div>
<div class="t " style="font-size:5.15px;color:#1f1f1f;right:504.30px;top:340.11px;height:6.18px;line-height:6.18px;">130</div>
<svg style="position:absolute;left:434.20px;top:336.90px" width="6.3" height="6.3" viewBox="0 0 6 6"><path d="M1.4 0.1 L5.9 0.1 5.9 4.6 4.57 3.27 2.31 5.53 0.47 3.69 2.73 1.43z" fill="#5ab52f" stroke="#5ab52f" stroke-width=".35" stroke-linejoin="round"/></svg>
<div class="t " style="font-size:5.15px;color:#1f1f1f;right:472.30px;top:340.11px;height:6.18px;line-height:6.18px;">191</div>
<svg style="position:absolute;left:466.20px;top:336.90px" width="6.3" height="6.3" viewBox="0 0 6 6"><path d="M1.4 0.1 L5.9 0.1 5.9 4.6 4.57 3.27 2.31 5.53 0.47 3.69 2.73 1.43z" fill="#5ab52f" stroke="#5ab52f" stroke-width=".35" stroke-linejoin="round"/></svg>
<div class="t " style="font-size:5.15px;color:#1f1f1f;right:430.60px;top:340.11px;height:6.18px;line-height:6.18px;">29</div>
<svg style="position:absolute;left:507.90px;top:337.10px" width="5.8" height="5.8" viewBox="0 0 6 6"><path d="M1.4 5.9 L5.9 5.9 5.9 1.4 4.57 2.73 2.31 0.47 0.47 2.31 2.73 4.57z" fill="#e3171f" stroke="#e3171f" stroke-width=".35" stroke-linejoin="round"/></svg>
<div class="t " style="font-size:5.15px;color:#1f1f1f;right:390.70px;top:340.11px;height:6.18px;line-height:6.18px;">72</div>
<svg style="position:absolute;left:547.80px;top:336.90px" width="6.3" height="6.3" viewBox="0 0 6 6"><path d="M1.4 0.1 L5.9 0.1 5.9 4.6 4.57 3.27 2.31 5.53 0.47 3.69 2.73 1.43z" fill="#5ab52f" stroke="#5ab52f" stroke-width=".35" stroke-linejoin="round"/></svg>
<div class="t " style="font-size:5.15px;color:#1f1f1f;right:350.00px;top:340.11px;height:6.18px;line-height:6.18px;">52.8961%</div>
<div class="t " style="font-size:5.15px;color:#1f1f1f;right:281.40px;top:340.11px;height:6.18px;line-height:6.18px;">71.70</div>
<div class="t " style="font-size:5.15px;color:#1f1f1f;right:244.70px;top:340.11px;height:6.18px;line-height:6.18px;">135.54</div>
<div class="t " style="font-size:5.15px;color:#1f1f1f;right:208.90px;top:340.11px;height:6.18px;line-height:6.18px;">-47.10%</div>
<svg style="position:absolute;left:729.60px;top:337.10px" width="5.8" height="5.8" viewBox="0 0 6 6"><path d="M1.4 5.9 L5.9 5.9 5.9 1.4 4.57 2.73 2.31 0.47 0.47 2.31 2.73 4.57z" fill="#e3171f" stroke="#e3171f" stroke-width=".35" stroke-linejoin="round"/></svg>
<svg style="position:absolute;left:588.00px;top:333.20px;" width="36.00" height="18.80" viewBox="588 333.2 36 18.80000000000001"><polygon points="591.8,348.4 591.8,339.4 601.0,336.2 610.3,348.0 619.5,344.8 619.5,348.4" fill="#cfe0f2"/><polyline points="591.8,339.4 601.0,336.2 610.3,348.0 619.5,344.8" fill="none" stroke="#4c4cd0" stroke-width="1.1"/><circle cx="591.8" cy="339.4" r=".6" fill="#f08000"/><circle cx="619.5" cy="344.8" r=".6" fill="#f08000"/></svg>
<div class="" style="position:absolute;left:301.70px;top:352.00px;width:435.50px;height:1.80px;background:#fbf8f0"></div>
<div class="" style="position:absolute;left:301.70px;top:353.55px;width:435.50px;height:35.00px;background:#ead9aa"></div>
<div class="t " style="font-size:4.9px;color:#1f1f1f;left:304.20px;top:358.41px;height:5.88px;line-height:5.88px;">IMPORTACION</div>
<div class="t " style="font-size:4.9px;color:#1f1f1f;left:304.20px;top:368.61px;height:5.88px;line-height:5.88px;">EXTRACOMUNITARIA</div>
<div class="t " style="font-size:4.9px;color:#1f1f1f;left:304.20px;top:378.81px;height:5.88px;line-height:5.88px;">(IM)</div>
<div class="t " style="font-size:5.15px;color:#1f1f1f;left:359.20px;top:368.56px;height:6.18px;line-height:6.18px;">Venta P</div>
<div class="t " style="font-size:5.15px;color:#1f1f1f;right:504.30px;top:368.56px;height:6.18px;line-height:6.18px;">315,204</div>
<svg style="position:absolute;left:434.20px;top:365.35px" width="6.3" height="6.3" viewBox="0 0 6 6"><path d="M1.4 0.1 L5.9 0.1 5.9 4.6 4.57 3.27 2.31 5.53 0.47 3.69 2.73 1.43z" fill="#5ab52f" stroke="#5ab52f" stroke-width=".35" stroke-linejoin="round"/></svg>
<div class="t " style="font-size:5.15px;color:#1f1f1f;right:472.30px;top:368.56px;height:6.18px;line-height:6.18px;">229,118</div>
<svg style="position:absolute;left:466.20px;top:365.55px" width="5.8" height="5.8" viewBox="0 0 6 6"><path d="M1.4 5.9 L5.9 5.9 5.9 1.4 4.57 2.73 2.31 0.47 0.47 2.31 2.73 4.57z" fill="#e3171f" stroke="#e3171f" stroke-width=".35" stroke-linejoin="round"/></svg>
<div class="t " style="font-size:5.15px;color:#1f1f1f;right:430.60px;top:368.56px;height:6.18px;line-height:6.18px;">233,906</div>
<svg style="position:absolute;left:507.90px;top:365.35px" width="6.3" height="6.3" viewBox="0 0 6 6"><path d="M1.4 0.1 L5.9 0.1 5.9 4.6 4.57 3.27 2.31 5.53 0.47 3.69 2.73 1.43z" fill="#5ab52f" stroke="#5ab52f" stroke-width=".35" stroke-linejoin="round"/></svg>
<div class="t " style="font-size:5.15px;color:#1f1f1f;right:390.70px;top:368.56px;height:6.18px;line-height:6.18px;">182,806</div>
<svg style="position:absolute;left:547.80px;top:365.55px" width="5.8" height="5.8" viewBox="0 0 6 6"><path d="M1.4 5.9 L5.9 5.9 5.9 1.4 4.57 2.73 2.31 0.47 0.47 2.31 2.73 4.57z" fill="#e3171f" stroke="#e3171f" stroke-width=".35" stroke-linejoin="round"/></svg>
<div class="t " style="font-size:5.15px;color:#1f1f1f;right:350.00px;top:368.56px;height:6.18px;line-height:6.18px;">3.4999%</div>
<div class="t " style="font-size:5.15px;color:#1f1f1f;right:281.40px;top:368.56px;height:6.18px;line-height:6.18px;">450.26</div>
<div class="t " style="font-size:5.15px;color:#1f1f1f;right:244.70px;top:368.56px;height:6.18px;line-height:6.18px;">377.75</div>
<div class="t " style="font-size:5.15px;color:#1f1f1f;right:208.90px;top:368.56px;height:6.18px;line-height:6.18px;">19.20%</div>
<svg style="position:absolute;left:729.60px;top:365.35px" width="6.3" height="6.3" viewBox="0 0 6 6"><path d="M1.4 0.1 L5.9 0.1 5.9 4.6 4.57 3.27 2.31 5.53 0.47 3.69 2.73 1.43z" fill="#5ab52f" stroke="#5ab52f" stroke-width=".35" stroke-linejoin="round"/></svg>
<svg style="position:absolute;left:588.00px;top:353.80px;" width="36.00" height="34.50" viewBox="588 353.8 36 34.5"><polygon points="591.8,377.7 591.8,364.6 601.0,372.9 610.3,372.2 619.5,377.3 619.5,377.7" fill="#cfe0f2"/><polyline points="591.8,364.6 601.0,372.9 610.3,372.2 619.5,377.3" fill="none" stroke="#4c4cd0" stroke-width="1.1"/><circle cx="591.8" cy="364.6" r=".6" fill="#f08000"/><circle cx="619.5" cy="377.3" r=".6" fill="#f08000"/></svg>
<div class="" style="position:absolute;left:301.70px;top:388.20px;width:435.50px;height:1.80px;background:#fbf8f0"></div>
<div class="" style="position:absolute;left:301.70px;top:389.75px;width:435.50px;height:19.00px;background:#ead9aa"></div>
<div class="t " style="font-size:5.15px;color:#1f1f1f;left:359.20px;top:396.76px;height:6.18px;line-height:6.18px;">Rdto P</div>
<div class="t " style="font-size:5.15px;color:#1f1f1f;right:504.30px;top:396.76px;height:6.18px;line-height:6.18px;">225,636</div>
<svg style="position:absolute;left:434.20px;top:393.55px" width="6.3" height="6.3" viewBox="0 0 6 6"><path d="M1.4 0.1 L5.9 0.1 5.9 4.6 4.57 3.27 2.31 5.53 0.47 3.69 2.73 1.43z" fill="#5ab52f" stroke="#5ab52f" stroke-width=".35" stroke-linejoin="round"/></svg>
<div class="t " style="font-size:5.15px;color:#1f1f1f;right:472.30px;top:396.76px;height:6.18px;line-height:6.18px;">166,945</div>
<svg style="position:absolute;left:466.20px;top:393.75px" width="5.8" height="5.8" viewBox="0 0 6 6"><path d="M1.4 5.9 L5.9 5.9 5.9 1.4 4.57 2.73 2.31 0.47 0.47 2.31 2.73 4.57z" fill="#e3171f" stroke="#e3171f" stroke-width=".35" stroke-linejoin="round"/></svg>
<div class="t " style="font-size:5.15px;color:#1f1f1f;right:430.60px;top:396.76px;height:6.18px;line-height:6.18px;">157,944</div>
<svg style="position:absolute;left:507.90px;top:393.75px" width="5.8" height="5.8" viewBox="0 0 6 6"><path d="M1.4 5.9 L5.9 5.9 5.9 1.4 4.57 2.73 2.31 0.47 0.47 2.31 2.73 4.57z" fill="#e3171f" stroke="#e3171f" stroke-width=".35" stroke-linejoin="round"/></svg>
<div class="t " style="font-size:5.15px;color:#1f1f1f;right:390.70px;top:396.76px;height:6.18px;line-height:6.18px;">133,155</div>
<svg style="position:absolute;left:547.80px;top:393.75px" width="5.8" height="5.8" viewBox="0 0 6 6"><path d="M1.4 5.9 L5.9 5.9 5.9 1.4 4.57 2.73 2.31 0.47 0.47 2.31 2.73 4.57z" fill="#e3171f" stroke="#e3171f" stroke-width=".35" stroke-linejoin="round"/></svg>
<div class="t " style="font-size:5.15px;color:#1f1f1f;right:350.00px;top:396.76px;height:6.18px;line-height:6.18px;">3.3759%</div>
<div class="t " style="font-size:5.15px;color:#1f1f1f;right:281.40px;top:396.76px;height:6.18px;line-height:6.18px;">327.97</div>
<div class="t " style="font-size:5.15px;color:#1f1f1f;right:244.70px;top:396.76px;height:6.18px;line-height:6.18px;">285.26</div>
<div class="t " style="font-size:5.15px;color:#1f1f1f;right:208.90px;top:396.76px;height:6.18px;line-height:6.18px;">14.97%</div>
<svg style="position:absolute;left:729.60px;top:393.55px" width="6.3" height="6.3" viewBox="0 0 6 6"><path d="M1.4 0.1 L5.9 0.1 5.9 4.6 4.57 3.27 2.31 5.53 0.47 3.69 2.73 1.43z" fill="#5ab52f" stroke="#5ab52f" stroke-width=".35" stroke-linejoin="round"/></svg>
<svg style="position:absolute;left:588.00px;top:390.00px;" width="36.00" height="18.50" viewBox="588 390 36 18.5"><polygon points="591.8,405.9 591.8,393.5 601.0,400.3 610.3,402.0 619.5,405.5 619.5,405.9" fill="#cfe0f2"/><polyline points="591.8,393.5 601.0,400.3 610.3,402.0 619.5,405.5" fill="none" stroke="#4c4cd0" stroke-width="1.1"/><circle cx="591.8" cy="393.5" r=".6" fill="#f08000"/><circle cx="619.5" cy="405.5" r=".6" fill="#f08000"/></svg>
<div class="" style="position:absolute;left:301.70px;top:408.70px;width:435.50px;height:1.80px;background:#fbf8f0"></div>
<div class="" style="position:absolute;left:301.70px;top:410.25px;width:435.50px;height:25.00px;background:#ead9aa"></div>
<div class="t " style="font-size:5.15px;color:#1f1f1f;left:359.20px;top:415.16px;height:6.18px;line-height:6.18px;">Nº</div>
<div class="t " style="font-size:5.15px;color:#1f1f1f;left:359.20px;top:425.36px;height:6.18px;line-height:6.18px;">Operaciones</div>
<div class="t " style="font-size:5.15px;color:#1f1f1f;right:504.30px;top:420.26px;height:6.18px;line-height:6.18px;">903</div>
<svg style="position:absolute;left:434.20px;top:417.05px" width="6.3" height="6.3" viewBox="0 0 6 6"><path d="M1.4 0.1 L5.9 0.1 5.9 4.6 4.57 3.27 2.31 5.53 0.47 3.69 2.73 1.43z" fill="#5ab52f" stroke="#5ab52f" stroke-width=".35" stroke-linejoin="round"/></svg>
<div class="t " style="font-size:5.15px;color:#1f1f1f;right:472.30px;top:420.26px;height:6.18px;line-height:6.18px;">581</div>
<svg style="position:absolute;left:466.20px;top:417.25px" width="5.8" height="5.8" viewBox="0 0 6 6"><path d="M1.4 5.9 L5.9 5.9 5.9 1.4 4.57 2.73 2.31 0.47 0.47 2.31 2.73 4.57z" fill="#e3171f" stroke="#e3171f" stroke-width=".35" stroke-linejoin="round"/></svg>
<div class="t " style="font-size:5.15px;color:#1f1f1f;right:430.60px;top:420.26px;height:6.18px;line-height:6.18px;">542</div>
<svg style="position:absolute;left:507.90px;top:417.25px" width="5.8" height="5.8" viewBox="0 0 6 6"><path d="M1.4 5.9 L5.9 5.9 5.9 1.4 4.57 2.73 2.31 0.47 0.47 2.31 2.73 4.57z" fill="#e3171f" stroke="#e3171f" stroke-width=".35" stroke-linejoin="round"/></svg>
<div class="t " style="font-size:5.15px;color:#1f1f1f;right:390.70px;top:420.26px;height:6.18px;line-height:6.18px;">406</div>
<svg style="position:absolute;left:547.80px;top:417.25px" width="5.8" height="5.8" viewBox="0 0 6 6"><path d="M1.4 5.9 L5.9 5.9 5.9 1.4 4.57 2.73 2.31 0.47 0.47 2.31 2.73 4.57z" fill="#e3171f" stroke="#e3171f" stroke-width=".35" stroke-linejoin="round"/></svg>
<div class="t " style="font-size:5.15px;color:#1f1f1f;right:350.00px;top:420.26px;height:6.18px;line-height:6.18px;">2.9363%</div>
<div class="t " style="font-size:5.15px;color:#1f1f1f;right:281.40px;top:420.26px;height:6.18px;line-height:6.18px;">406.00</div>
<div class="t " style="font-size:5.15px;color:#1f1f1f;right:244.70px;top:420.26px;height:6.18px;line-height:6.18px;">265.90</div>
<div class="t " style="font-size:5.15px;color:#1f1f1f;right:208.90px;top:420.26px;height:6.18px;line-height:6.18px;">52.69%</div>
<svg style="position:absolute;left:729.60px;top:417.05px" width="6.3" height="6.3" viewBox="0 0 6 6"><path d="M1.4 0.1 L5.9 0.1 5.9 4.6 4.57 3.27 2.31 5.53 0.47 3.69 2.73 1.43z" fill="#5ab52f" stroke="#5ab52f" stroke-width=".35" stroke-linejoin="round"/></svg>
<svg style="position:absolute;left:588.00px;top:410.50px;" width="36.00" height="24.50" viewBox="588 410.5 36 24.5"><polygon points="591.8,429.3 591.8,416.8 601.0,423.7 610.3,425.4 619.5,428.9 619.5,429.3" fill="#cfe0f2"/><polyline points="591.8,416.8 601.0,423.7 610.3,425.4 619.5,428.9" fill="none" stroke="#4c4cd0" stroke-width="1.1"/><circle cx="591.8" cy="416.8" r=".6" fill="#f08000"/><circle cx="619.5" cy="428.9" r=".6" fill="#f08000"/></svg>
<div class="" style="position:absolute;left:301.70px;top:435.20px;width:435.50px;height:1.80px;background:#fbf8f0"></div>
<div class="" style="position:absolute;left:301.70px;top:436.75px;width:435.50px;height:19.50px;background:#ead9aa"></div>
<div class="t " style="font-size:5.15px;color:#1f1f1f;left:359.20px;top:443.91px;height:6.18px;line-height:6.18px;">Teus</div>
<div class="t " style="font-size:5.15px;color:#1f1f1f;right:504.30px;top:443.91px;height:6.18px;line-height:6.18px;">1,364</div>
<svg style="position:absolute;left:434.20px;top:440.70px" width="6.3" height="6.3" viewBox="0 0 6 6"><path d="M1.4 0.1 L5.9 0.1 5.9 4.6 4.57 3.27 2.31 5.53 0.47 3.69 2.73 1.43z" fill="#5ab52f" stroke="#5ab52f" stroke-width=".35" stroke-linejoin="round"/></svg>
<div class="t " style="font-size:5.15px;color:#1f1f1f;right:472.30px;top:443.91px;height:6.18px;line-height:6.18px;">955</div>
<svg style="position:absolute;left:466.20px;top:440.90px" width="5.8" height="5.8" viewBox="0 0 6 6"><path d="M1.4 5.9 L5.9 5.9 5.9 1.4 4.57 2.73 2.31 0.47 0.47 2.31 2.73 4.57z" fill="#e3171f" stroke="#e3171f" stroke-width=".35" stroke-linejoin="round"/></svg>
<div class="t " style="font-size:5.15px;color:#1f1f1f;right:430.60px;top:443.91px;height:6.18px;line-height:6.18px;">876</div>
<svg style="position:absolute;left:507.90px;top:440.90px" width="5.8" height="5.8" viewBox="0 0 6 6"><path d="M1.4 5.9 L5.9 5.9 5.9 1.4 4.57 2.73 2.31 0.47 0.47 2.31 2.73 4.57z" fill="#e3171f" stroke="#e3171f" stroke-width=".35" stroke-linejoin="round"/></svg>
<div class="t " style="font-size:5.15px;color:#1f1f1f;right:390.70px;top:443.91px;height:6.18px;line-height:6.18px;">638</div>
<svg style="position:absolute;left:547.80px;top:440.90px" width="5.8" height="5.8" viewBox="0 0 6 6"><path d="M1.4 5.9 L5.9 5.9 5.9 1.4 4.57 2.73 2.31 0.47 0.47 2.31 2.73 4.57z" fill="#e3171f" stroke="#e3171f" stroke-width=".35" stroke-linejoin="round"/></svg>
<div class="t " style="font-size:5.15px;color:#1f1f1f;right:350.00px;top:443.91px;height:6.18px;line-height:6.18px;">2.9393%</div>
<div class="t " style="font-size:5.15px;color:#1f1f1f;right:281.40px;top:443.91px;height:6.18px;line-height:6.18px;">1.57</div>
<div class="t " style="font-size:5.15px;color:#1f1f1f;right:244.70px;top:443.91px;height:6.18px;line-height:6.18px;">1.57</div>
<div class="t " style="font-size:5.15px;color:#1f1f1f;right:208.90px;top:443.91px;height:6.18px;line-height:6.18px;">0.10%</div>
<svg style="position:absolute;left:729.60px;top:440.70px" width="6.3" height="6.3" viewBox="0 0 6 6"><path d="M1.4 0.1 L5.9 0.1 5.9 4.6 4.57 3.27 2.31 5.53 0.47 3.69 2.73 1.43z" fill="#5ab52f" stroke="#5ab52f" stroke-width=".35" stroke-linejoin="round"/></svg>
<svg style="position:absolute;left:588.00px;top:437.00px;" width="36.00" height="19.00" viewBox="588 437 36 19"><polygon points="591.8,452.3 591.8,440.2 601.0,447.0 610.3,448.8 619.5,451.9 619.5,452.3" fill="#cfe0f2"/><polyline points="591.8,440.2 601.0,447.0 610.3,448.8 619.5,451.9" fill="none" stroke="#4c4cd0" stroke-width="1.1"/><circle cx="591.8" cy="440.2" r=".6" fill="#f08000"/><circle cx="619.5" cy="451.9" r=".6" fill="#f08000"/></svg>
<div class="" style="position:absolute;left:108.00px;top:454.80px;width:828.00px;height:2.20px;background:#0c0c0c"></div>
<div class="" style="position:absolute;left:924.60px;top:48.80px;width:10.80px;height:406.00px;background:linear-gradient(90deg,#ececec,#f8f8f8 40%,#fdfdfd);border-left:0.6px solid #e6e6e6"></div>
<div class="" style="position:absolute;left:925.00px;top:206.30px;width:10.00px;height:198.50px;background:linear-gradient(90deg,#f0f0f0,#dcdcdc 60%,#c6c6c6);border:0.7px solid #a6a6a6;border-radius:1.2px"></div>
<div class="" style="position:absolute;left:927.60px;top:302.80px;width:4.80px;height:4.20px;background:repeating-linear-gradient(#8c8c8c 0,#8c8c8c .6px,transparent .6px,transparent 1.3px)"></div>
<svg style="position:absolute;left:925.00px;top:50.30px;" width="10.00" height="7.50" viewBox="0 0 10.00 7.50"><path d="M3 4.6 h4 l-2-2.4z" fill="#222"/></svg>
<svg style="position:absolute;left:925.00px;top:446.50px;" width="10.00" height="7.50" viewBox="0 0 10.00 7.50"><path d="M3 2.6 h4 l-2 2.4z" fill="#222"/></svg>
</body></html>
